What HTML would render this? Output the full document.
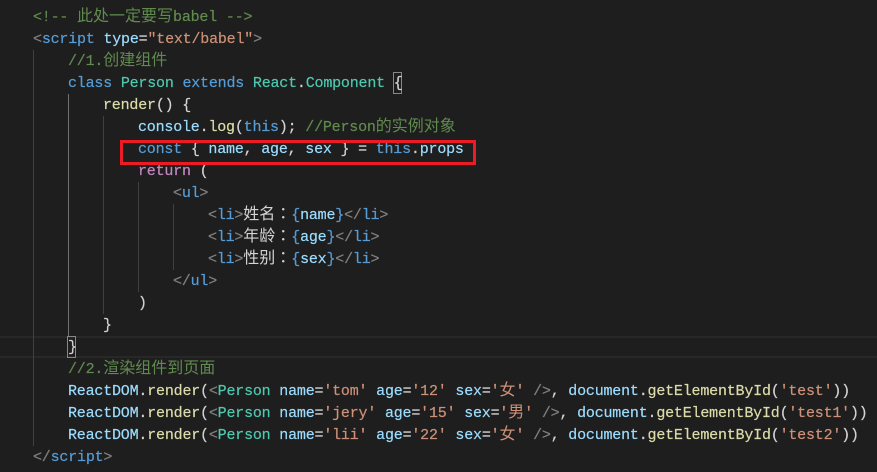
<!DOCTYPE html>
<html><head><meta charset="utf-8"><style>
html,body{margin:0;padding:0;background:#1e1e1e}
#r{position:relative;width:877px;height:472px;overflow:hidden;background:#1e1e1e;font:15px "Liberation Mono",monospace;letter-spacing:-.2px;color:#d4d4d4;-webkit-text-stroke:.2px}
.l{position:absolute;white-space:pre;height:22px;line-height:22px}
.b{position:absolute}
i{font-style:normal;font-family:"WenQuanYi Zen Hei","Noto Sans CJK SC",sans-serif;font-size:16px;letter-spacing:0;line-height:0;-webkit-text-stroke:0}
u{text-decoration:none;font-family:"Noto Sans CJK TC",sans-serif}
.g{color:#808080}.t{color:#569cd6}.a{color:#9cdcfe}.s{color:#ce9178}.c{color:#608b4e}.k{color:#4ec9b0}.f{color:#dcdcaa}.m{color:#c586c0}
</style></head><body><div id="r">
<div class="b" style="left:0;top:336px;width:877px;height:2px;background:#282828"></div>
<div class="b" style="left:0;top:356px;width:877px;height:2px;background:#282828"></div>
<div class="b" style="left:33px;top:50px;width:1px;height:396px;background:#404040"></div>
<div class="b" style="left:68px;top:94px;width:1px;height:242px;background:#707070"></div>
<div class="b" style="left:103px;top:116px;width:1px;height:198px;background:#404040"></div>
<div class="b" style="left:138px;top:182px;width:1px;height:110px;background:#404040"></div>
<div class="b" style="left:173px;top:204px;width:1px;height:66px;background:#404040"></div>
<div class="b" style="left:393px;top:72px;width:7px;height:20px;border:1px solid #888"></div>
<div class="b" style="left:67px;top:336px;width:7px;height:20px;border:1px solid #888"></div>
<div class="l c" style="left:33px;top:7px">&lt;!-- <i>此处一定要写</i>babel --&gt;</div>
<div class="l" style="left:33px;top:29px"><span class="g">&lt;</span><span class="t">script</span> <span class="a">type</span>=<span class="s">"text/babel"</span><span class="g">&gt;</span></div>
<div class="l c" style="left:68px;top:51px">//1.<i>创建组件</i></div>
<div class="l" style="left:68px;top:73px"><span class="t">class</span> <span class="k">Person</span> <span class="t">extends</span> <span class="k">React</span>.<span class="k">Component</span> {</div>
<div class="l" style="left:103px;top:95px"><span class="f">render</span>() {</div>
<div class="l" style="left:138px;top:117px"><span class="a">console</span>.<span class="f">log</span>(<span class="t">this</span>); <span class="c">//Person<i>的实例对象</i></span></div>
<div class="l" style="left:138px;top:139px"><span class="t">const</span> { <span class="a">name</span>, <span class="a">age</span>, <span class="a">sex</span> } = <span class="t">this</span>.<span class="a">props</span></div>
<div class="l" style="left:138px;top:161px"><span class="m">return</span> (</div>
<div class="l" style="left:173px;top:183px"><span class="g">&lt;</span><span class="t">ul</span><span class="g">&gt;</span></div>
<div class="l" style="left:208px;top:205px"><span class="g">&lt;</span><span class="t">li</span><span class="g">&gt;</span><i>姓名<u>：</u></i><span class="t">{</span><span class="a">name</span><span class="t">}</span><span class="g">&lt;/</span><span class="t">li</span><span class="g">&gt;</span></div>
<div class="l" style="left:208px;top:227px"><span class="g">&lt;</span><span class="t">li</span><span class="g">&gt;</span><i>年龄<u>：</u></i><span class="t">{</span><span class="a">age</span><span class="t">}</span><span class="g">&lt;/</span><span class="t">li</span><span class="g">&gt;</span></div>
<div class="l" style="left:208px;top:249px"><span class="g">&lt;</span><span class="t">li</span><span class="g">&gt;</span><i>性别<u>：</u></i><span class="t">{</span><span class="a">sex</span><span class="t">}</span><span class="g">&lt;/</span><span class="t">li</span><span class="g">&gt;</span></div>
<div class="l" style="left:173px;top:271px"><span class="g">&lt;/</span><span class="t">ul</span><span class="g">&gt;</span></div>
<div class="l" style="left:138px;top:293px">)</div>
<div class="l" style="left:103px;top:315px">}</div>
<div class="l" style="left:68px;top:337px">}</div>
<div class="l c" style="left:68px;top:359px">//2.<i>渲染组件到页面</i></div>
<div class="l" style="left:68px;top:381px"><span class="a">ReactDOM</span>.<span class="f">render</span>(<span class="g">&lt;</span><span class="k">Person</span> <span class="a">name</span>=<span class="s">'tom'</span> <span class="a">age</span>=<span class="s">'12'</span> <span class="a">sex</span>=<span class="s">'<i>女</i>'</span> <span class="g">/&gt;</span>, <span class="a">document</span>.<span class="f">getElementById</span>(<span class="s">'test'</span>))</div>
<div class="l" style="left:68px;top:403px"><span class="a">ReactDOM</span>.<span class="f">render</span>(<span class="g">&lt;</span><span class="k">Person</span> <span class="a">name</span>=<span class="s">'jery'</span> <span class="a">age</span>=<span class="s">'15'</span> <span class="a">sex</span>=<span class="s">'<i>男</i>'</span> <span class="g">/&gt;</span>, <span class="a">document</span>.<span class="f">getElementById</span>(<span class="s">'test1'</span>))</div>
<div class="l" style="left:68px;top:425px"><span class="a">ReactDOM</span>.<span class="f">render</span>(<span class="g">&lt;</span><span class="k">Person</span> <span class="a">name</span>=<span class="s">'lii'</span> <span class="a">age</span>=<span class="s">'22'</span> <span class="a">sex</span>=<span class="s">'<i>女</i>'</span> <span class="g">/&gt;</span>, <span class="a">document</span>.<span class="f">getElementById</span>(<span class="s">'test2'</span>))</div>
<div class="l" style="left:33px;top:447px"><span class="g">&lt;/</span><span class="t">script</span><span class="g">&gt;</span></div>
<div class="b" style="left:120px;top:140px;width:350px;height:19px;border:3px solid #ed1c24"></div>
</div></body></html>
